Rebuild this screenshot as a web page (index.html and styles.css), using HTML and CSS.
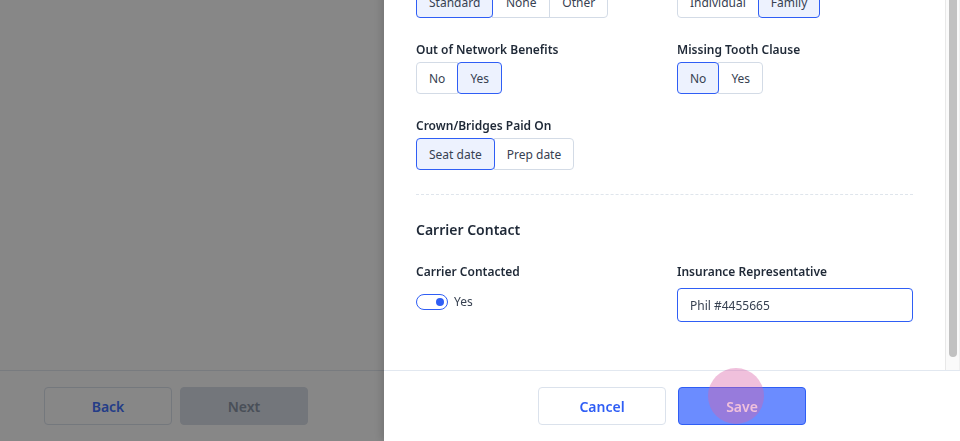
FILE: index.html
```html
<!DOCTYPE html>
<html lang="en">

<head>
    <meta charset="UTF-8">
    <meta name="viewport" content="width=device-width, initial-scale=1.0">
    <title>Insurance Plan</title>
    <link rel="stylesheet" href="styles.css">
</head>

<body>
    <div class="page">
        <main class="page-main"></main>
        <footer class="page-footer">
            <button class="btn btn-outline btn-back">Back</button>
            <button class="btn btn-muted">Next</button>
        </footer>
    </div>

    <div class="backdrop"></div>

    <aside class="drawer">
        <div class="drawer-main">
            <div class="drawer-body">
                <div class="form-grid">
                    <div class="field">
                        <div class="field-label">Coordination of Benefits</div>
                        <div class="segmented segmented-wide">
                            <button class="seg is-active">Standard</button>
                            <button class="seg">None</button>
                            <button class="seg">Other</button>
                        </div>
                    </div>
                    <div class="field">
                        <div class="field-label">Deductible Applies To</div>
                        <div class="segmented">
                            <button class="seg">Individual</button>
                            <button class="seg is-active">Family</button>
                        </div>
                    </div>
                    <div class="field">
                        <div class="field-label">Out of Network Benefits</div>
                        <div class="segmented">
                            <button class="seg">No</button>
                            <button class="seg is-active">Yes</button>
                        </div>
                    </div>
                    <div class="field">
                        <div class="field-label">Missing Tooth Clause</div>
                        <div class="segmented">
                            <button class="seg is-active">No</button>
                            <button class="seg">Yes</button>
                        </div>
                    </div>
                    <div class="field">
                        <div class="field-label">Crown/Bridges Paid On</div>
                        <div class="segmented">
                            <button class="seg is-active">Seat date</button>
                            <button class="seg">Prep date</button>
                        </div>
                    </div>
                </div>

                <hr class="divider">

                <h2 class="section-title">Carrier Contact</h2>
                <div class="form-grid">
                    <div class="field">
                        <div class="field-label">Carrier Contacted</div>
                        <label class="toggle-row">
                            <span class="toggle is-on"><span class="toggle-knob"></span></span>
                            <span>Yes</span>
                        </label>
                    </div>
                    <div class="field">
                        <label class="field-label" for="rep">Insurance Representative</label>
                        <input class="text-input" id="rep" type="text" value="Phil #4455665">
                    </div>
                </div>
            </div>

            <!-- scroll track for the form area -->
            <div class="scroll-rail">
                <div class="scroll-thumb"></div>
            </div>
        </div>

        <footer class="drawer-footer">
            <button class="btn btn-outline">Cancel</button>
            <button class="btn btn-primary">Save</button>
            <span class="click-ripple"></span>
        </footer>
    </aside>
</body>

</html>
```

FILE: styles.css
```css
html,
body {
    height: 100%;
}

body {
    font-family: "Noto Sans", "Open Sans", sans-serif;
    margin: 0;
    padding: 0;
    background-color: #fff;
    color: #374151;
}

button {
    font-family: inherit;
}

/* page behind the drawer */
.page {
    display: flex;
    flex-direction: column;
    height: 100%;
}

.page-main {
    flex: 1;
}

.page-footer {
    display: flex;
    gap: 8px;
    padding: 16px 44px;
    border-top: 1px solid #e2e8f0;
}

.btn {
    width: 128px;
    height: 38px;
    border-radius: 4px;
    font-size: 14px;
    font-weight: 600;
    cursor: pointer;
}

.btn-outline {
    background-color: #fff;
    border: 1px solid #dbe2ec;
    color: #2f5ef5;
}

.btn-back {
    color: #4473ff;
}

.btn-muted {
    background-color: #d9dfe8;
    border: 1px solid #d9dfe8;
    color: #8b95a7;
}

.btn-primary {
    background-color: #6b8cff;
    border: 1px solid #2f5ef5;
    color: #fff;
}

.backdrop {
    position: fixed;
    inset: 0;
    background-color: rgba(0, 0, 0, 0.47);
}

/* side drawer */
.drawer {
    position: fixed;
    top: -58px;
    bottom: 0;
    right: 0;
    width: 576px;
    display: flex;
    flex-direction: column;
    background-color: #fff;
    box-shadow: -3px 0 8px rgba(0, 0, 0, 0.14);
}

.drawer-main {
    flex: 1;
    display: flex;
    min-height: 0;
}

.drawer-body {
    flex: 1;
    overflow: hidden;
    padding: 24px 32px 61px;
}

.scroll-rail {
    width: 13px;
    background-color: #fafafa;
    border-left: 1px solid #e8e8e8;
    border-right: 1px solid #efefef;
}

.scroll-thumb {
    height: 415px;
    margin: 0 2px 0 3px;
    border-radius: 4px;
    background-color: #c1c1c1;
}

.form-grid {
    display: grid;
    grid-template-columns: 1fr 1fr;
    column-gap: 25px;
    row-gap: 24px;
}

.field {
    display: flex;
    flex-direction: column;
    align-items: flex-start;
}

.field-label {
    font-size: 12px;
    line-height: 16px;
    font-weight: 600;
    color: #1f2937;
    margin-bottom: 4px;
}

.segmented {
    display: flex;
    height: 32px;
}

.seg {
    position: relative;
    padding: 0 12px;
    margin-left: -1px;
    background-color: #fff;
    border: 1px solid #d3dbe6;
    font-size: 12px;
    color: #374151;
    cursor: pointer;
}

.segmented-wide .seg {
    min-width: 58px;
}

.seg:first-child {
    margin-left: 0;
    border-radius: 4px 0 0 4px;
}

.seg:last-child {
    border-radius: 0 4px 4px 0;
}

.seg.is-active {
    z-index: 1;
    background-color: #edf2fe;
    border-color: #2f5ef5;
    border-radius: 4px;
}

.divider {
    margin: 24px 0 0;
    border: 0;
    border-top: 1px dashed #dfe5ec;
}

.section-title {
    margin: 25px 0 24px;
    font-size: 14px;
    line-height: 20px;
    font-weight: 600;
    color: #1f2937;
}

.toggle-row {
    display: flex;
    align-items: center;
    gap: 6px;
    padding-top: 9px;
    font-size: 12px;
    color: #374151;
}

.toggle {
    display: flex;
    align-items: center;
    justify-content: flex-end;
    box-sizing: border-box;
    width: 32px;
    height: 16px;
    padding: 0 3px;
    border: 1.5px solid #2f5ef5;
    border-radius: 8px;
    background-color: #fff;
}

.toggle-knob {
    width: 8px;
    height: 8px;
    border-radius: 50%;
    background-color: #2f5ef5;
}

.text-input {
    box-sizing: border-box;
    width: 100%;
    height: 34px;
    margin-top: 4px;
    padding: 0 12px;
    border: 1px solid #2f5ef5;
    border-radius: 4px;
    outline: none;
    font-family: inherit;
    font-size: 12px;
    color: #374151;
}

.drawer-footer {
    position: relative;
    display: flex;
    justify-content: center;
    gap: 12px;
    padding: 16px;
    border-top: 1px solid #e2e8f0;
}

/* click highlight on the save button */
.click-ripple {
    position: absolute;
    left: 324px;
    top: -3px;
    width: 56px;
    height: 56px;
    border-radius: 50%;
    background-color: rgba(217, 97, 167, 0.4);
    pointer-events: none;
}
```
